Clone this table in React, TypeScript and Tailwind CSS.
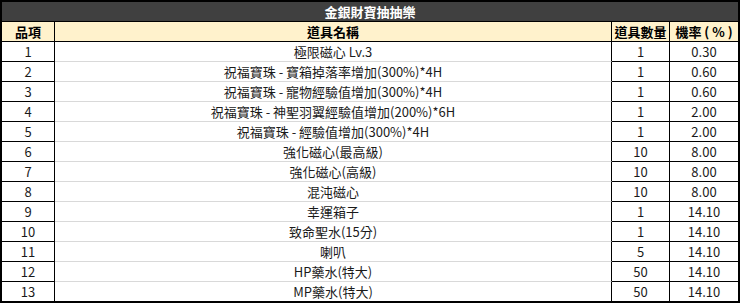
import React from 'react';

interface PrizeRow {
  no: number;
  name: string;
  qty: number;
  rate: string;
}

const rows: PrizeRow[] = [
  { no: 1, name: '極限磁心 Lv.3', qty: 1, rate: '0.30' },
  { no: 2, name: '祝福寶珠 - 寶箱掉落率增加(300%)*4H', qty: 1, rate: '0.60' },
  { no: 3, name: '祝福寶珠 - 寵物經驗值增加(300%)*4H', qty: 1, rate: '0.60' },
  { no: 4, name: '祝福寶珠 - 神聖羽翼經驗值增加(200%)*6H', qty: 1, rate: '2.00' },
  { no: 5, name: '祝福寶珠 - 經驗值增加(300%)*4H', qty: 1, rate: '2.00' },
  { no: 6, name: '強化磁心(最高級)', qty: 10, rate: '8.00' },
  { no: 7, name: '強化磁心(高級)', qty: 10, rate: '8.00' },
  { no: 8, name: '混沌磁心', qty: 10, rate: '8.00' },
  { no: 9, name: '幸運箱子', qty: 1, rate: '14.10' },
  { no: 10, name: '致命聖水(15分)', qty: 1, rate: '14.10' },
  { no: 11, name: '喇叭', qty: 5, rate: '14.10' },
  { no: 12, name: 'HP藥水(特大)', qty: 50, rate: '14.10' },
  { no: 13, name: 'MP藥水(特大)', qty: 50, rate: '14.10' },
];

const App: React.FC = () => {
  return (
    <div
      className="w-[740px] h-[303px] border-2 border-black bg-white text-[13px] text-[#1a1a1a]"
      style={{ fontFamily: '"Noto Sans CJK TC", "Noto Sans", sans-serif' }}
    >
      {/* タイトル */}
      <div className="h-[20px] leading-[19px] bg-[#404040] text-white font-bold text-center border-b border-black">
        金銀財寶抽抽樂
      </div>

      <table className="w-full table-fixed border-separate border-spacing-0">
        <colgroup>
          <col className="w-[53px]" />
          <col className="w-[557px]" />
          <col className="w-[58px]" />
          <col className="w-[68px]" />
        </colgroup>
        <thead>
          <tr className="bg-[#fff2cc] text-black font-bold">
            <th className="h-[20px] p-0 leading-[19px] border-r border-b border-black font-bold">品項</th>
            <th className="h-[20px] p-0 leading-[19px] border-r border-b border-black font-bold">道具名稱</th>
            <th className="h-[20px] p-0 leading-[19px] border-r border-b border-black font-bold">道具數量</th>
            <th className="h-[20px] p-0 leading-[19px] border-b border-black font-bold whitespace-nowrap">機率 ( % )</th>
          </tr>
        </thead>
        <tbody>
          {rows.map((row, i) => {
            const last = i === rows.length - 1;
            return (
              <tr key={row.no} className="text-center">
                <td className={`p-0 leading-[19px] border-r border-black ${last ? 'h-[19px]' : 'h-[20px] border-b'}`}>
                  {row.no}
                </td>
                <td className={`p-0 leading-[19px] border-r border-black ${last ? 'h-[19px]' : 'h-[20px] border-b border-b-[#d9d9d9]'}`}>
                  {row.name}
                </td>
                <td className={`p-0 leading-[19px] border-r border-black ${last ? 'h-[19px]' : 'h-[20px] border-b'}`}>
                  {row.qty}
                </td>
                <td className={`p-0 leading-[19px] border-black ${last ? 'h-[19px]' : 'h-[20px] border-b'}`}>
                  {row.rate}
                </td>
              </tr>
            );
          })}
        </tbody>
      </table>
    </div>
  );
};

export default App;
